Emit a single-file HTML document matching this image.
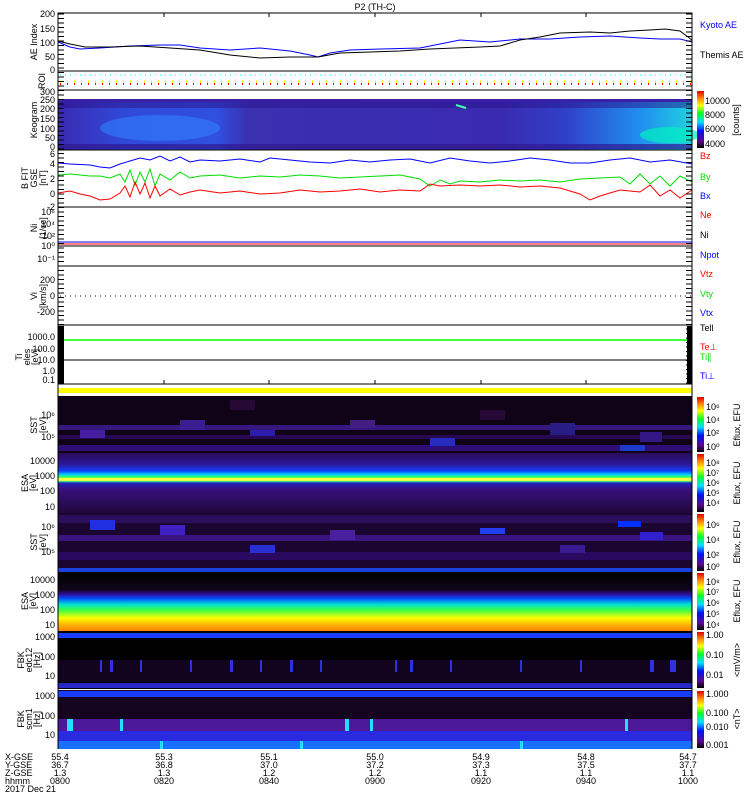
<!DOCTYPE html>
<html><head><meta charset="utf-8"><style>
html,body{margin:0;padding:0;background:#fff}
svg{display:block}
text{font-family:"Liberation Sans",sans-serif;font-size:9px;fill:#000}
</style></head><body>
<svg width="750" height="800" viewBox="0 0 750 800" xmlns="http://www.w3.org/2000/svg">
<defs>
<linearGradient id="cb" x1="0" y1="1" x2="0" y2="0">
<stop offset="0" stop-color="#000"/><stop offset="0.12" stop-color="#5a0a8a"/><stop offset="0.3" stop-color="#0010ff"/><stop offset="0.45" stop-color="#00e0ff"/><stop offset="0.6" stop-color="#00ff30"/><stop offset="0.75" stop-color="#ffff00"/><stop offset="0.88" stop-color="#ff8000"/><stop offset="1" stop-color="#e00000"/>
</linearGradient>
<linearGradient id="esa1" x1="0" y1="0" x2="0" y2="1">
<stop offset="0" stop-color="#2a0a5a"/><stop offset="0.2" stop-color="#2a1aa0"/><stop offset="0.3" stop-color="#1040ff"/><stop offset="0.36" stop-color="#00d0ff"/><stop offset="0.4" stop-color="#30ff60"/><stop offset="0.44" stop-color="#ffff40"/><stop offset="0.47" stop-color="#40ff80"/><stop offset="0.5" stop-color="#2020c0"/><stop offset="0.6" stop-color="#3a1080"/><stop offset="1" stop-color="#20083a"/>
</linearGradient>
<linearGradient id="esa2" x1="0" y1="0" x2="0" y2="1">
<stop offset="0" stop-color="#000"/><stop offset="0.3" stop-color="#10051a"/><stop offset="0.38" stop-color="#3010a0"/><stop offset="0.45" stop-color="#0050ff"/><stop offset="0.55" stop-color="#00e0d0"/><stop offset="0.65" stop-color="#40ff40"/><stop offset="0.78" stop-color="#ffff00"/><stop offset="0.9" stop-color="#ffb000"/><stop offset="1" stop-color="#ff8000"/>
</linearGradient>
<linearGradient id="keo" x1="0" y1="0" x2="1" y2="0">
<stop offset="0" stop-color="#3a2ab0"/><stop offset="0.1" stop-color="#3048d8"/><stop offset="0.25" stop-color="#3050e0"/><stop offset="0.3" stop-color="#3a30b0"/><stop offset="0.7" stop-color="#3a2ab0"/><stop offset="0.8" stop-color="#3040c8"/><stop offset="0.92" stop-color="#2090f0"/><stop offset="1" stop-color="#20d0e0"/>
</linearGradient>
<pattern id="tk" width="6" height="4.5" patternUnits="userSpaceOnUse"><rect x="0" y="0" width="6" height="1" fill="#000"/></pattern>
</defs>

<text x="375" y="10" text-anchor="middle" font-size="10">P2 (TH-C)</text>

<!-- AE panel -->
<rect x="58" y="13" width="634" height="58" fill="#fff" stroke="#000"/>
<polyline fill="none" stroke="#00f" stroke-width="1" points="58,42 70,47 80,49 100,48 130,46 160,45 180,45 200,48 230,50 260,48 290,51 310,55 318,57 330,53 350,50 380,49 420,48 440,44 460,40 490,42 520,39 550,39 580,37 610,36 640,38 660,39 680,39 692,42"/>
<polyline fill="none" stroke="#000" stroke-width="1" points="58,41 70,44 85,47 110,47 140,46 170,48 200,50 230,55 260,58 290,57 318,57 340,53 370,52 400,51 430,49 455,48 480,47 500,46 520,40 540,37 560,33 590,32 610,33 630,31 650,30 665,29 680,31 692,40"/>
<text x="55" y="17" text-anchor="end">200</text><text x="55" y="32" text-anchor="end">150</text><text x="55" y="46" text-anchor="end">100</text><text x="55" y="60" text-anchor="end">50</text><text x="55" y="73" text-anchor="end">0</text>
<text transform="translate(37,42) rotate(-90)" text-anchor="middle">AE Index</text>
<text x="700" y="28" style="fill:#00f">Kyoto AE</text>
<text x="700" y="58">Themis AE</text>

<!-- ROI -->
<rect x="58" y="71" width="634" height="19" fill="#fff" stroke="#000"/>
<line x1="60" y1="75" x2="692" y2="75" stroke="#0ff" stroke-dasharray="1,4"/>
<line x1="60" y1="82" x2="692" y2="82" stroke="#ee0" stroke-width="3" stroke-dasharray="1,6"/>
<line x1="60" y1="84" x2="692" y2="84" stroke="#f00" stroke-width="2" stroke-dasharray="1,6"/>
<text transform="translate(45,81) rotate(-90)" text-anchor="middle" font-size="8">ROI</text>

<!-- Keogram -->
<rect x="58" y="90" width="634" height="60" fill="#fff" stroke="#000"/>
<rect x="58" y="99" width="634" height="51" fill="url(#keo)"/>
<rect x="58" y="99" width="634" height="3" fill="#3a20a8"/>
<rect x="58" y="102" width="634" height="6" fill="#2a1288" opacity="0.5"/>
<ellipse cx="160" cy="128" rx="60" ry="13" fill="#3080ff" opacity="0.6"/>
<ellipse cx="670" cy="135" rx="30" ry="8" fill="#00f0c0" opacity="0.7"/>
<rect x="58" y="144" width="634" height="5" fill="#301890" opacity="0.7"/>
<line x1="456" y1="105" x2="466" y2="108" stroke="#40ffb0" stroke-width="2"/>
<g font-size="8"><text x="55" y="95" text-anchor="end">300</text><text x="55" y="103" text-anchor="end">250</text><text x="55" y="112" text-anchor="end">200</text><text x="55" y="122" text-anchor="end">150</text><text x="55" y="132" text-anchor="end">100</text><text x="55" y="141" text-anchor="end">50</text><text x="55" y="150" text-anchor="end">0</text></g>
<text transform="translate(37,120) rotate(-90)" text-anchor="middle">Keogram</text>
<rect x="697" y="91" width="7" height="57" fill="url(#cb)"/>
<text x="705" y="104">10000</text><text x="705" y="118">8000</text><text x="705" y="132">6000</text><text x="705" y="147">4000</text>
<text transform="translate(739,120) rotate(-90)" text-anchor="middle">[counts]</text>

<!-- B -->
<rect x="58" y="150" width="634" height="57" fill="#fff" stroke="#000"/>
<polyline fill="none" stroke="#00f" points="58,163 70,164 90,165 100,167 110,168 120,164 130,161 140,158 150,160 160,156 170,161 180,157 190,162 200,160 220,161 240,159 260,162 270,158 290,160 310,162 330,163 350,160 370,162 390,160 410,159 430,163 450,158 470,161 490,163 510,161 530,158 550,160 570,163 590,163 610,160 630,158 650,162 670,160 692,164"/>
<polyline fill="none" stroke="#0d0" points="58,175 70,174 90,176 100,176 110,178 120,174 125,182 130,170 135,185 140,172 145,182 150,169 155,186 160,174 170,180 180,172 190,178 200,176 220,175 240,178 260,176 280,177 300,175 320,176 340,178 360,177 380,176 400,175 420,179 430,186 440,180 450,184 460,181 480,182 500,180 520,181 540,180 560,182 580,179 600,178 620,177 630,184 640,174 650,184 660,176 670,186 680,176 692,182"/>
<polyline fill="none" stroke="#f00" points="58,193 70,191 80,194 90,196 100,200 110,199 120,193 125,186 130,197 135,182 140,194 145,183 150,198 155,186 160,196 170,189 180,195 190,192 200,190 220,193 240,191 260,194 280,193 300,190 320,192 340,191 360,189 380,192 400,190 420,191 430,184 440,186 460,185 480,186 500,185 520,187 540,186 560,188 580,194 590,200 600,196 620,190 640,192 650,185 660,196 670,190 680,198 692,190"/>
<g font-size="8"><text x="55" y="157" text-anchor="end">6</text><text x="55" y="167" text-anchor="end">4</text><text x="55" y="182" text-anchor="end">2</text><text x="55" y="197" text-anchor="end">0</text><text x="55" y="210" text-anchor="end">-2</text></g>
<text transform="translate(28,178) rotate(-90)" text-anchor="middle" font-size="8">B FIT</text>
<text transform="translate(37,178) rotate(-90)" text-anchor="middle" font-size="8">GSE</text>
<text transform="translate(46,178) rotate(-90)" text-anchor="middle" font-size="8">[nT]</text>
<text x="700" y="159" style="fill:#f00">Bz</text><text x="700" y="180" style="fill:#0d0">By</text><text x="700" y="199" style="fill:#00f">Bx</text>

<!-- Ni -->
<rect x="58" y="207" width="634" height="39" fill="#fff" stroke="#000"/>
<line x1="58" y1="242" x2="692" y2="242" stroke="#00f"/>
<line x1="58" y1="244" x2="692" y2="244" stroke="#f00"/>
<g font-size="8"><text x="55" y="215" text-anchor="end">10⁶</text><text x="55" y="227" text-anchor="end">10⁴</text><text x="55" y="239" text-anchor="end">10²</text><text x="55" y="249" text-anchor="end">10⁰</text></g>
<text transform="translate(37,228) rotate(-90)" text-anchor="middle" font-size="8">Ni</text>
<text transform="translate(46,228) rotate(-90)" text-anchor="middle" font-size="8">[1/cc]</text>
<text x="700" y="218" style="fill:#f00">Ne</text><text x="700" y="238">Ni</text>
<rect x="58" y="246" width="634" height="20" fill="#fff" stroke="#000"/>
<text x="55" y="262" text-anchor="end" font-size="8">10⁻¹</text>
<text x="700" y="258" style="fill:#00f">Npot</text>

<!-- Vi -->
<rect x="58" y="266" width="634" height="59" fill="#fff" stroke="#000"/>
<line x1="60" y1="296" x2="692" y2="296" stroke="#000" stroke-dasharray="1,4"/>
<g font-size="8"><text x="55" y="283" text-anchor="end">200</text><text x="55" y="299" text-anchor="end">0</text><text x="55" y="315" text-anchor="end">-200</text></g>
<text transform="translate(37,296) rotate(-90)" text-anchor="middle" font-size="8">Vi</text>
<text transform="translate(46,296) rotate(-90)" text-anchor="middle" font-size="8">[km/s]</text>
<text x="700" y="277" style="fill:#f00">Vtz</text><text x="700" y="297" style="fill:#0d0">Vty</text><text x="700" y="316" style="fill:#00f">Vtx</text>

<!-- Ti -->
<rect x="58" y="325" width="634" height="59" fill="#fff" stroke="#000"/>
<line x1="58" y1="340" x2="692" y2="340" stroke="#0f0" stroke-width="1.5"/>
<line x1="58" y1="360" x2="692" y2="360" stroke="#000"/>
<rect x="58" y="326" width="6" height="57" fill="#000"/><rect x="687" y="326" width="5" height="57" fill="#000"/>
<g font-size="8"><text x="55" y="340" text-anchor="end">1000.0</text><text x="55" y="352" text-anchor="end">100.0</text><text x="55" y="363" text-anchor="end">10.0</text><text x="55" y="374" text-anchor="end">1.0</text><text x="55" y="383" text-anchor="end">0.1</text></g>
<text transform="translate(22,357) rotate(-90)" text-anchor="middle" font-size="8">Ti</text>
<text transform="translate(30,357) rotate(-90)" text-anchor="middle" font-size="8">eles</text>
<text transform="translate(38,357) rotate(-90)" text-anchor="middle" font-size="8">[eV]</text>
<text x="700" y="331">Tell</text><text x="700" y="350" style="fill:#f00">Te⊥</text><text x="700" y="360" style="fill:#0d0">Ti∥</text><text x="700" y="379" style="fill:#00f">Ti⊥</text>

<!-- yellow bar -->
<rect x="58" y="388" width="634" height="5" fill="#ff0"/>

<!-- SST 1 -->
<rect x="58" y="396" width="634" height="57" fill="#100318"/>
<g opacity="0.9">
<rect x="58" y="425" width="634" height="5" fill="#3a1a8a"/>
<rect x="58" y="435" width="634" height="4" fill="#2a0a5a"/>
<rect x="58" y="445" width="634" height="6" fill="#301080"/>
<rect x="80" y="430" width="25" height="8" fill="#4a20b0"/>
<rect x="180" y="420" width="25" height="10" fill="#4020a0"/>
<rect x="250" y="430" width="25" height="6" fill="#3020c0"/>
<rect x="350" y="420" width="25" height="8" fill="#4a2090"/>
<rect x="430" y="438" width="25" height="8" fill="#2a30d0"/>
<rect x="620" y="445" width="25" height="6" fill="#2040e0"/>
<rect x="550" y="423" width="25" height="12" fill="#2a2090"/>
<rect x="640" y="432" width="22" height="10" fill="#3a1a90"/>
<rect x="230" y="400" width="25" height="10" fill="#2a0a3a"/>
<rect x="480" y="410" width="25" height="10" fill="#2a0a3a"/>
</g>
<g font-size="8"><text x="55" y="418" text-anchor="end">10⁶</text><text x="55" y="440" text-anchor="end">10⁵</text></g>
<text transform="translate(37,425) rotate(-90)" text-anchor="middle" font-size="8">SST</text>
<text transform="translate(46,425) rotate(-90)" text-anchor="middle" font-size="8">[eV]</text>
<rect x="697" y="397" width="7" height="55" fill="url(#cb)"/>
<text x="706" y="410" font-size="8">10⁶</text><text x="706" y="423" font-size="8">10⁴</text><text x="706" y="436" font-size="8">10²</text><text x="706" y="450" font-size="8">10⁰</text>
<text transform="translate(740,425) rotate(-90)" text-anchor="middle" font-size="8">Eflux, EFU</text>

<!-- ESA 1 -->
<rect x="58" y="453" width="634" height="60" fill="url(#esa1)"/>
<rect x="58" y="478" width="634" height="3" fill="#ffff40" opacity="0.8"/>
<g font-size="8"><text x="55" y="464" text-anchor="end">10000</text><text x="55" y="479" text-anchor="end">1000</text><text x="55" y="494" text-anchor="end">100</text><text x="55" y="510" text-anchor="end">10</text></g>
<text transform="translate(28,483) rotate(-90)" text-anchor="middle" font-size="8">ESA</text>
<text transform="translate(36,483) rotate(-90)" text-anchor="middle" font-size="8">[eV]</text>
<rect x="697" y="454" width="7" height="58" fill="url(#cb)"/>
<text x="706" y="466" font-size="8">10⁸</text><text x="706" y="476" font-size="8">10⁷</text><text x="706" y="486" font-size="8">10⁶</text><text x="706" y="496" font-size="8">10⁵</text><text x="706" y="506" font-size="8">10⁴</text>
<text transform="translate(740,483) rotate(-90)" text-anchor="middle" font-size="8">Eflux, EFU</text>

<!-- SST 2 -->
<rect x="58" y="513" width="634" height="59" fill="#1a0630"/>
<g>
<rect x="58" y="515" width="634" height="8" fill="#2a0f5a"/>
<rect x="58" y="535" width="634" height="6" fill="#3a1580"/>
<rect x="58" y="552" width="634" height="8" fill="#2a0a60"/>
<rect x="58" y="568" width="634" height="4" fill="#1a40e0"/>
<rect x="90" y="520" width="25" height="10" fill="#2030e0"/>
<rect x="160" y="525" width="25" height="10" fill="#4020c0"/>
<rect x="250" y="545" width="25" height="8" fill="#2a30d0"/>
<rect x="330" y="530" width="25" height="10" fill="#4a20a0"/>
<rect x="480" y="528" width="25" height="6" fill="#2040f0"/>
<rect x="618" y="521" width="23" height="6" fill="#0030ff"/>
<rect x="640" y="532" width="23" height="8" fill="#3020d0"/>
<rect x="560" y="545" width="25" height="8" fill="#3a1a90"/>
</g>
<g font-size="8"><text x="55" y="530" text-anchor="end">10⁶</text><text x="55" y="555" text-anchor="end">10⁵</text></g>
<text transform="translate(37,542) rotate(-90)" text-anchor="middle" font-size="8">SST</text>
<text transform="translate(46,542) rotate(-90)" text-anchor="middle" font-size="8">[eV]</text>
<rect x="697" y="514" width="7" height="57" fill="url(#cb)"/>
<text x="706" y="528" font-size="8">10⁶</text><text x="706" y="543" font-size="8">10⁴</text><text x="706" y="558" font-size="8">10²</text><text x="706" y="570" font-size="8">10⁰</text>
<text transform="translate(740,542) rotate(-90)" text-anchor="middle" font-size="8">Eflux, EFU</text>

<!-- ESA 2 -->
<rect x="58" y="572" width="634" height="59" fill="url(#esa2)"/>
<g font-size="8"><text x="55" y="583" text-anchor="end">10000</text><text x="55" y="598" text-anchor="end">1000</text><text x="55" y="613" text-anchor="end">100</text><text x="55" y="628" text-anchor="end">10</text></g>
<text transform="translate(28,601) rotate(-90)" text-anchor="middle" font-size="8">ESA</text>
<text transform="translate(36,601) rotate(-90)" text-anchor="middle" font-size="8">[eV]</text>
<rect x="697" y="573" width="7" height="57" fill="url(#cb)"/>
<text x="706" y="585" font-size="8">10⁸</text><text x="706" y="595" font-size="8">10⁷</text><text x="706" y="606" font-size="8">10⁶</text><text x="706" y="617" font-size="8">10⁵</text><text x="706" y="628" font-size="8">10⁴</text>
<text transform="translate(740,601) rotate(-90)" text-anchor="middle" font-size="8">Eflux, EFU</text>

<!-- FBK 1 -->
<rect x="58" y="631" width="634" height="58" fill="#000"/>
<rect x="58" y="633" width="634" height="5" fill="#1a3cff"/>
<rect x="58" y="660" width="634" height="22" fill="#12041e"/>
<g fill="#3030e0">
<rect x="100" y="660" width="2" height="12"/><rect x="110" y="660" width="3" height="12"/><rect x="140" y="660" width="2" height="12"/><rect x="190" y="660" width="2" height="12"/><rect x="230" y="660" width="3" height="12"/><rect x="260" y="660" width="2" height="12"/><rect x="290" y="660" width="3" height="12"/><rect x="320" y="660" width="2" height="12"/><rect x="395" y="660" width="2" height="12"/><rect x="410" y="660" width="3" height="12"/><rect x="450" y="660" width="2" height="12"/><rect x="520" y="660" width="2" height="12"/><rect x="580" y="660" width="2" height="12"/><rect x="650" y="660" width="4" height="12"/><rect x="670" y="660" width="6" height="12"/>
</g>
<rect x="58" y="683" width="634" height="5" fill="#2828c8"/>
<g font-size="8"><text x="55" y="640" text-anchor="end">1000</text><text x="55" y="660" text-anchor="end">100</text><text x="55" y="679" text-anchor="end">10</text></g>
<text transform="translate(24,660) rotate(-90)" text-anchor="middle" font-size="8">FBK</text>
<text transform="translate(32,660) rotate(-90)" text-anchor="middle" font-size="8">edc12</text>
<text transform="translate(40,660) rotate(-90)" text-anchor="middle" font-size="8">[Hz]</text>
<rect x="697" y="632" width="7" height="56" fill="url(#cb)"/>
<text x="706" y="638" font-size="8">1.00</text><text x="706" y="658" font-size="8">0.10</text><text x="706" y="678" font-size="8">0.01</text>
<text transform="translate(740,660) rotate(-90)" text-anchor="middle" font-size="8">&lt;mV/m&gt;</text>

<!-- FBK 2 -->
<rect x="58" y="690" width="634" height="59" fill="#14041e"/>
<rect x="58" y="691" width="634" height="6" fill="#1a3cff"/>
<rect x="58" y="719" width="634" height="12" fill="#4a1898"/>
<rect x="58" y="731" width="634" height="10" fill="#2a2ae0"/>
<rect x="58" y="741" width="634" height="8" fill="#1870ff"/>
<g fill="#20e0ff"><rect x="67" y="719" width="6" height="12"/><rect x="120" y="719" width="3" height="12"/><rect x="345" y="719" width="4" height="12"/><rect x="370" y="719" width="3" height="12"/><rect x="625" y="719" width="3" height="12"/><rect x="160" y="741" width="3" height="8"/><rect x="300" y="741" width="3" height="8"/><rect x="520" y="741" width="3" height="8"/></g>
<g font-size="8"><text x="55" y="699" text-anchor="end">1000</text><text x="55" y="719" text-anchor="end">100</text><text x="55" y="738" text-anchor="end">10</text></g>
<text transform="translate(24,719) rotate(-90)" text-anchor="middle" font-size="8">FBK</text>
<text transform="translate(32,719) rotate(-90)" text-anchor="middle" font-size="8">scm1</text>
<text transform="translate(40,719) rotate(-90)" text-anchor="middle" font-size="8">[Hz]</text>
<rect x="697" y="691" width="7" height="57" fill="url(#cb)"/>
<text x="706" y="697" font-size="8">1.000</text><text x="706" y="716" font-size="8">0.100</text><text x="706" y="730" font-size="8">0.010</text><text x="706" y="748" font-size="8">0.001</text>
<text transform="translate(740,719) rotate(-90)" text-anchor="middle" font-size="8">&lt;nT&gt;</text>

<!-- minor ticks -->
<rect x="58" y="13" width="6" height="372" fill="url(#tk)"/>
<rect x="686" y="13" width="6" height="372" fill="url(#tk)"/>

<!-- time ticks -->
<g stroke="#000">
<line x1="164" y1="13" x2="164" y2="17"/><line x1="269" y1="13" x2="269" y2="17"/><line x1="375" y1="13" x2="375" y2="17"/><line x1="481" y1="13" x2="481" y2="17"/><line x1="586" y1="13" x2="586" y2="17"/>
<line x1="164" y1="380" x2="164" y2="384"/><line x1="269" y1="380" x2="269" y2="384"/><line x1="375" y1="380" x2="375" y2="384"/><line x1="481" y1="380" x2="481" y2="384"/><line x1="586" y1="380" x2="586" y2="384"/>
<line x1="58" y1="13" x2="58" y2="749"/><line x1="692" y1="13" x2="692" y2="749"/>
</g>

<!-- bottom labels -->
<g font-size="9">
<text x="5" y="760">X-GSE</text><text x="5" y="768">Y-GSE</text><text x="5" y="776">Z-GSE</text><text x="5" y="784">hhmm</text><text x="5" y="792">2017 Dec 21</text>
</g>
<g text-anchor="middle">
<text x="60" y="760">55.4</text><text x="60" y="768">36.7</text><text x="60" y="776">1.3</text><text x="60" y="784">0800</text>
<text x="164" y="760">55.3</text><text x="164" y="768">36.8</text><text x="164" y="776">1.3</text><text x="164" y="784">0820</text>
<text x="269" y="760">55.1</text><text x="269" y="768">37.0</text><text x="269" y="776">1.2</text><text x="269" y="784">0840</text>
<text x="375" y="760">55.0</text><text x="375" y="768">37.2</text><text x="375" y="776">1.2</text><text x="375" y="784">0900</text>
<text x="481" y="760">54.9</text><text x="481" y="768">37.3</text><text x="481" y="776">1.1</text><text x="481" y="784">0920</text>
<text x="586" y="760">54.8</text><text x="586" y="768">37.5</text><text x="586" y="776">1.1</text><text x="586" y="784">0940</text>
<text x="688" y="760">54.7</text><text x="688" y="768">37.7</text><text x="688" y="776">1.1</text><text x="688" y="784">1000</text>
</g>
</svg>
</body></html>
